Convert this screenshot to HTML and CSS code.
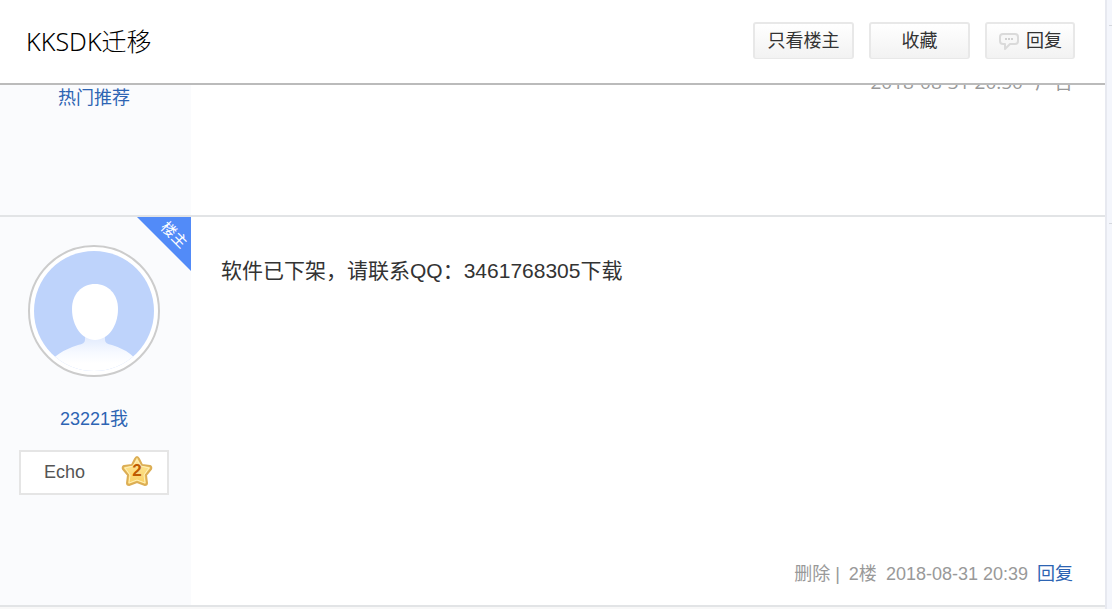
FILE: index.html
```
<!DOCTYPE html>
<html lang="zh-CN">
<head>
    <meta charset="UTF-8">
    <meta name="viewport" content="width=device-width, initial-scale=1.0">
    <title>KKSDK迁移</title>
    <link rel="stylesheet" href="styles.css">
</head>
<body>
    <div class="page">
        <div class="thread">
            <header class="thread-header">
                <h1>KKSDK迁移</h1>
                <div class="actions">
                    <button type="button" class="btn">只看楼主</button>
                    <button type="button" class="btn">收藏</button>
                    <button type="button" class="btn btn-reply">
                        <svg width="22" height="20" viewBox="0 0 22 20" aria-hidden="true">
                            <path d="M5 3h12q3 0 3 3v4q0 3-3 3h-5l-5 5v-5h-2q-3 0-3-3v-4q0-3 3-3z" fill="#f7f7f7" stroke="#dadada" stroke-width="2" stroke-linejoin="round"/>
                            <path d="M7 8h2M10 8h2M13 8h2" stroke="#d0d0d0" stroke-width="2"/>
                        </svg>
                        回复
                    </button>
                </div>
            </header>

            <main class="posts">
                <!-- Promoted post, partly under the header -->
                <article class="post post-ad">
                    <aside class="author">
                        <a href="#" class="author-name">热门推荐</a>
                    </aside>
                    <div class="post-body">
                        <div class="ad-meta"><span>2018-08-31 20:50</span><span>广告</span></div>
                    </div>
                </article>

                <article class="post">
                    <aside class="author">
                        <div class="owner-badge"><span>楼主</span></div>
                        <a href="#" class="avatar" aria-label="23221我">
                            <svg viewBox="0 0 120 120" aria-hidden="true">
                                <defs>
                                    <linearGradient id="body" x1="0" y1="0" x2="0" y2="1">
                                        <stop offset="0" stop-color="#dce7fd"/>
                                        <stop offset="0.5" stop-color="#f6f9ff"/>
                                        <stop offset="0.8" stop-color="#fff"/>
                                    </linearGradient>
                                </defs>
                                <rect width="120" height="120" fill="#bed3fb"/>
                                <path d="M51 82h20v7q0 4 7 5q14 4 24 14v12H18v-12q12-10 26-14q7-1 7-5z" fill="url(#body)"/>
                                <path d="M61 33c13 0 23 10 23 25c0 17-10 31-23 31s-23-14-23-31c0-15 10-25 23-25z" fill="#fff"/>
                            </svg>
                        </a>
                        <a href="#" class="author-name">23221我</a>
                        <div class="level">
                            <span>Echo</span>
                            <div class="star">
                                <svg width="34" height="34" viewBox="0 0 34 34" aria-hidden="true">
                                    <defs>
                                        <linearGradient id="gold" x1="0" y1="0" x2="0" y2="1">
                                            <stop offset="0" stop-color="#ffeaa0"/>
                                            <stop offset="1" stop-color="#f9cf60"/>
                                        </linearGradient>
                                    </defs>
                                    <path d="M17 3Q18 3 19 5L22 11L30 12Q32 13 31 15L26 21L27 29Q27 31 25 31L17 28L9 31Q7 31 7 29L8 21L3 15Q2 13 4 12L12 11L15 5Q16 3 17 3Z" fill="url(#gold)" stroke="#dcae55" stroke-width="2" stroke-linejoin="round"/>
                                    <path d="M17 6L21 12L29 14L24 21L25 29L17 26L9 29L10 21L5 14L13 12Z" fill="none" stroke="#fff0b8" stroke-width="1" stroke-linejoin="round"/>
                                </svg>
                                <b>2</b>
                            </div>
                        </div>
                    </aside>
                    <div class="post-body">
                        <p class="post-text">软件已下架，请联系QQ：3461768305下载</p>
                        <footer class="post-meta">
                            <span>删除 |</span>
                            <span>2楼</span>
                            <time datetime="2018-08-31T20:39">2018-08-31 20:39</time>
                            <a href="#">回复</a>
                        </footer>
                    </div>
                </article>
            </main>
        </div>
        <div class="gutter"></div>
    </div>
</body>
</html>
```
FILE: styles.css
```
* {
    margin: 0;
    padding: 0;
    box-sizing: border-box;
}

body {
    background-color: #f8f8f8;
    color: #333;
    font-family: "Liberation Sans", "Noto Sans CJK SC", sans-serif;
    font-size: 18px;
    line-height: 24px;
}

a {
    color: #2d64b3;
    text-decoration: none;
}

.page {
    display: flex;
    min-height: 100vh;
}

.thread {
    flex: 1;
    border-right: 2px solid #e7e9f0;
}

.gutter {
    width: 5px;
    background-color: #f4f6fc;
    background-image: linear-gradient(#d5d8de, #d5d8de), linear-gradient(#d5d8de, #d5d8de);
    background-size: 3px 1px;
    background-repeat: no-repeat;
    background-position: 2px 25px, 2px 223px;
}

.thread-header {
    position: relative;
    z-index: 1;
    display: flex;
    align-items: center;
    justify-content: space-between;
    padding: 22px 30px 24px 26px;
    background-color: #fff;
    border-bottom: 2px solid #bbb;
}

.thread-header h1 {
    color: #000;
    font-family: "Noto Sans", "Noto Sans CJK SC", sans-serif;
    font-size: 25px;
    font-weight: 300;
    line-height: 36px;
}

.actions {
    display: flex;
    gap: 15px;
}

.btn {
    display: flex;
    align-items: center;
    justify-content: center;
    gap: 6px;
    width: 101px;
    height: 37px;
    padding-bottom: 4px;
    border: 2px solid #e8e8e8;
    border-bottom-width: 1px;
    border-radius: 3px;
    background: linear-gradient(#fff, #f2f2f2);
    color: #333;
    font-family: inherit;
    font-size: 18px;
    cursor: pointer;
}

.btn-reply {
    width: 90px;
}

.btn svg {
    margin-top: 3px;
}

.posts {
    margin-top: -16px;
}

.post {
    display: flex;
    min-height: 390px;
    background-color: #fff;
    border-bottom: 2px solid #e2e4e6;
}

.post-ad {
    min-height: 148px;
}

.author {
    position: relative;
    display: flex;
    flex-direction: column;
    align-items: center;
    width: 191px;
    padding: 28px 22px 0 19px;
    background-color: #fafbfd;
}

.post-ad .author {
    padding-top: 17px;
}

.post-body {
    flex: 1;
    display: flex;
    flex-direction: column;
    justify-content: space-between;
    padding: 36px 32px 19px 30px;
}

.post-ad .post-body {
    padding-top: 1px;
}

.ad-meta {
    display: flex;
    justify-content: flex-end;
    gap: 12px;
    color: #999;
    font-family: "Open Sans", "Noto Sans CJK SC", sans-serif;
    font-size: 19px;
}

.owner-badge {
    position: absolute;
    top: 0;
    right: 0;
    width: 54px;
    height: 54px;
    background-color: #528bf8;
    clip-path: polygon(0 0, 100% 0, 100% 100%);
}

.owner-badge span {
    position: absolute;
    top: 6px;
    right: 2px;
    color: #fff;
    font-size: 15px;
    transform: rotate(45deg);
}

.avatar {
    width: 132px;
    height: 132px;
    padding: 4px;
    border: 2px solid #ccc;
    border-radius: 50%;
    background-color: #fff;
}

.avatar svg {
    display: block;
    border-radius: 50%;
}

.avatar + .author-name {
    margin-top: 30px;
}

.level {
    display: flex;
    align-items: center;
    justify-content: space-between;
    width: 100%;
    height: 45px;
    margin-top: 19px;
    padding: 0 13px 2px 23px;
    border: 2px solid #e5e5e5;
    background-color: #fff;
    color: #555;
}

.star {
    display: grid;
    place-items: center;
    margin-top: -2px;
}

.star svg,
.star b {
    grid-area: 1 / 1;
}

.star b {
    color: #bf5b00;
    font-size: 17px;
}

.post-text {
    font-size: 21px;
    line-height: 36px;
}

.post-meta {
    display: flex;
    justify-content: flex-end;
    gap: 9px;
    color: #999;
}
```
